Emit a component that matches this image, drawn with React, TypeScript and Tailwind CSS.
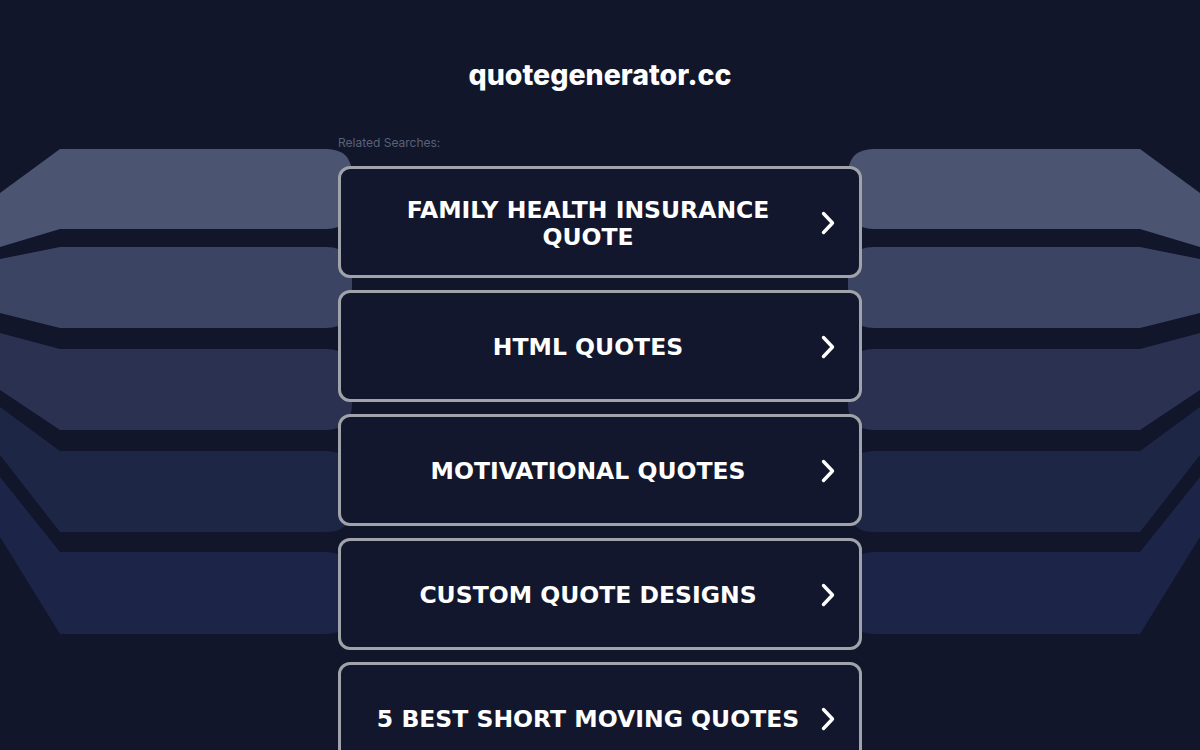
type Band = { t: number; b: number; tl: number; bl: number; color: string };

const bands: Band[] = [
  { t: 149, b: 229, tl: 193, bl: 247, color: "#4b5572" },
  { t: 247, b: 328, tl: 259, bl: 313, color: "#3b4463" },
  { t: 349, b: 430, tl: 333, bl: 390, color: "#2a3151" },
  { t: 451, b: 532, tl: 407, bl: 455, color: "#1e2646" },
  { t: 552, b: 634, tl: 477, bl: 537, color: "#1c2547" },
];

const searches = [
  "FAMILY HEALTH INSURANCE QUOTE",
  "HTML QUOTES",
  "MOTIVATIONAL QUOTES",
  "CUSTOM QUOTE DESIGNS",
  "5 BEST SHORT MOVING QUOTES",
];

// left band shape, mirrored for the right side
function bandPath(d: Band, end = 352, r = 26) {
  return `M0,${d.tl} L60,${d.t} L${end - r},${d.t} Q${end},${d.t} ${end},${d.t + r} L${end},${d.b - r} Q${end},${d.b} ${end - r},${d.b} L60,${d.b} L0,${d.bl} Z`;
}

function Backdrop() {
  return (
    <svg className="absolute inset-0 w-full h-full" viewBox="0 0 1200 750" preserveAspectRatio="none">
      {bands.map((d, i) => (
        <g key={i} fill={d.color}>
          <path d={bandPath(d)} />
          <path d={bandPath(d)} transform="translate(1200,0) scale(-1,1)" />
        </g>
      ))}
    </svg>
  );
}

function Chevron() {
  return (
    <svg width="14" height="24" viewBox="0 0 14 24" className="shrink-0 -mt-[2px]">
      <polyline
        points="2.5,2.5 11.5,12 2.5,21.5"
        fill="none"
        stroke="white"
        strokeWidth="3.4"
        strokeLinecap="round"
        strokeLinejoin="round"
      />
    </svg>
  );
}

export default function App() {
  return (
    <div className="relative h-[750px] overflow-hidden bg-[#11162b]">
      <Backdrop />
      <div className="relative w-[524px] mx-auto pt-[57px]">
        <h1 className="text-center text-white font-extrabold text-[28.5px] leading-[36px] font-['Inter',sans-serif]">
          quotegenerator.cc
        </h1>
        <p className="mt-[43px] text-[12px] leading-[14px] text-[#5b6178] font-['Inter',sans-serif]">
          Related Searches:
        </p>
        <div className="mt-[16px] flex flex-col gap-[12px]">
          {searches.map((s) => (
            <a
              key={s}
              href="#"
              className="h-[112px] flex items-center gap-[10px] pl-6 pr-6 pt-[3px] rounded-[12px] border-[3px] border-[#a1a3aa] bg-[#12172d] text-white"
            >
              <span className="flex-1 text-center font-bold text-[23.5px] leading-[27px] font-['DejaVu_Sans',sans-serif]">
                {s}
              </span>
              <Chevron />
            </a>
          ))}
        </div>
      </div>
    </div>
  );
}
